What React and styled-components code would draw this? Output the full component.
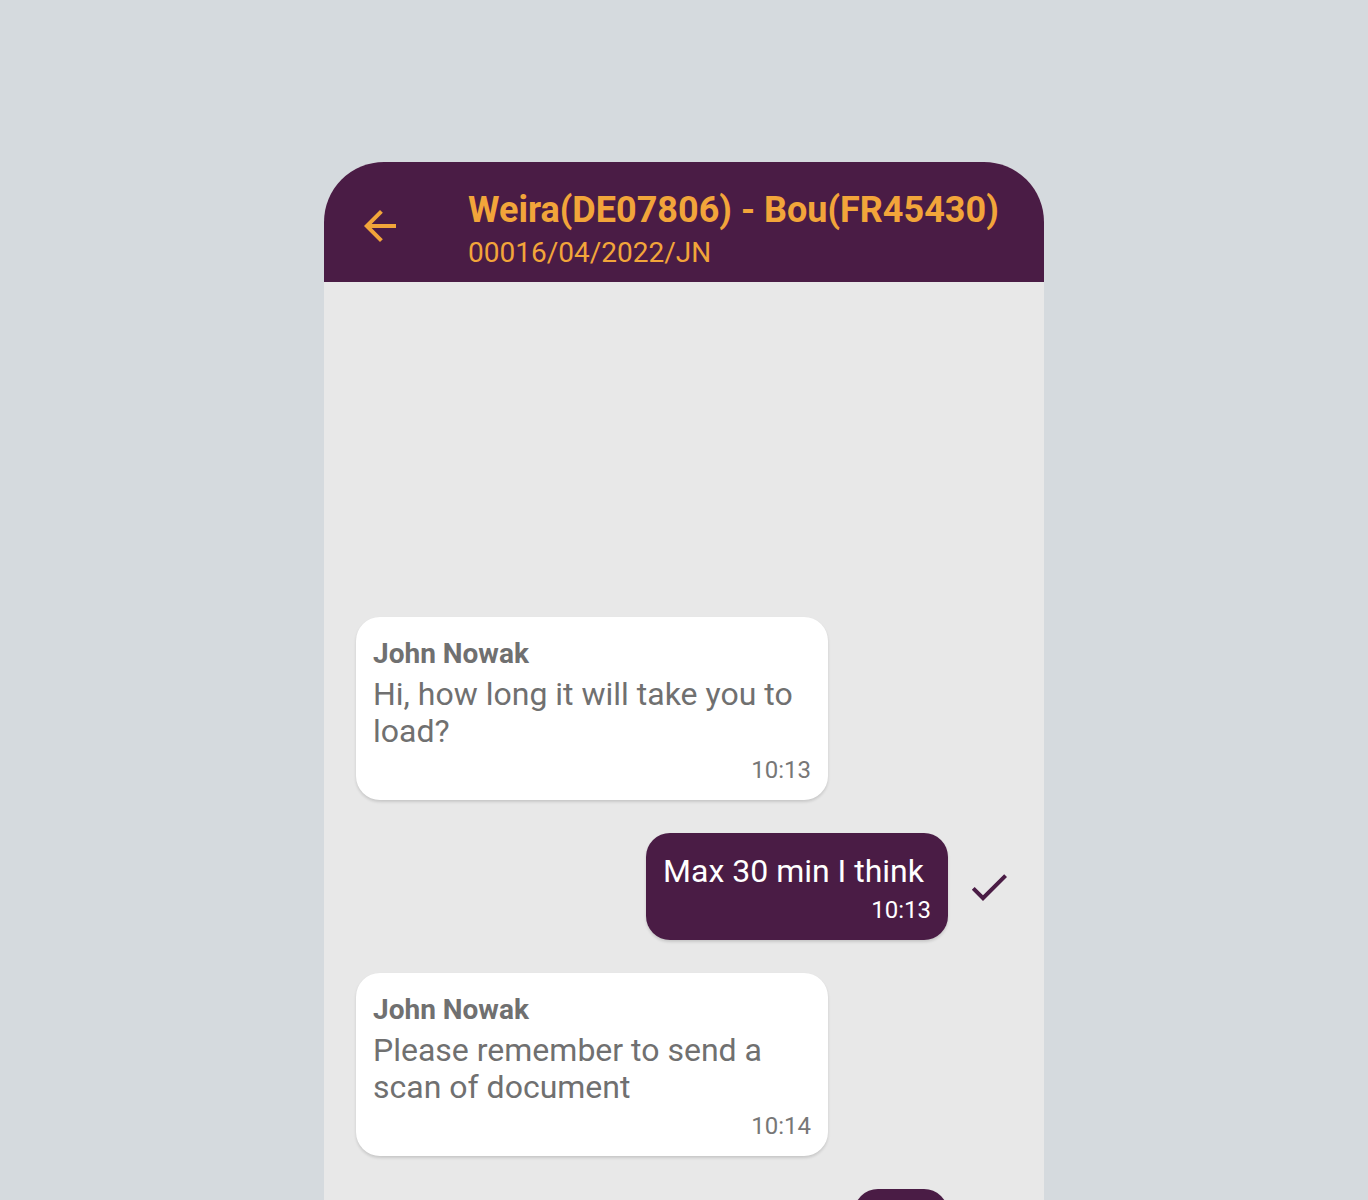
import React from 'react';
import styled, { createGlobalStyle } from 'styled-components';

const GlobalStyle = createGlobalStyle`
    html, body {
        margin: 0;
        padding: 0;
        background: #d5dade;
        overflow: hidden;
    }
    body {
        font-family: Roboto, "Noto Sans", Arial, sans-serif;
    }
`;

const Page = styled.div`
    display: flex;
    justify-content: center;
    padding-top: 162px;
    min-height: 1200px;
    box-sizing: border-box;
`;

const Phone = styled.div`
    width: 720px;
    min-height: 1100px;
    background: #e8e8e8;
    border-radius: 60px 60px 0 0;
    overflow: hidden;
    display: flex;
    flex-direction: column;
`;

const Header = styled.header`
    height: 120px;
    box-sizing: border-box;
    background: #4a1c45;
    display: flex;
    align-items: flex-start;
    padding: 27px 32px 0;
    gap: 64px;
`;

const BackButton = styled.div`
    width: 48px;
    height: 48px;
    margin-top: 13px;
    flex-shrink: 0;
    svg {
        display: block;
        fill: #f2a53a;
    }
`;

const Titles = styled.div`
    display: flex;
    flex-direction: column;
    gap: 5px;
    color: #f2a53a;
`;

const Title = styled.h1`
    margin: 0;
    font-size: 36px;
    line-height: 42px;
    font-weight: 700;
`;

const Subtitle = styled.div`
    font-size: 28px;
    line-height: 33px;
`;

const Messages = styled.div`
    display: flex;
    flex-direction: column;
    gap: 33px;
    padding: 335px 0 40px;
`;

const Row = styled.div`
    display: flex;
    align-items: center;
    justify-content: ${(p) => (p.$mine ? 'flex-end' : 'flex-start')};
    padding: ${(p) => (p.$mine ? '0 31px 0 0' : '0 0 0 32px')};
    gap: 17px;
`;

const Bubble = styled.div`
    box-sizing: border-box;
    width: ${(p) => (p.$mine ? 'auto' : '472px')};
    border-radius: 24px;
    padding: 20px 17px 16px;
    background: ${(p) => (p.$mine ? '#4a1c45' : '#ffffff')};
    color: ${(p) => (p.$mine ? '#ffffff' : '#707070')};
    box-shadow: 0 2px 3px rgba(0, 0, 0, 0.14);
    display: flex;
    flex-direction: column;
`;

const Author = styled.div`
    font-size: 28px;
    line-height: 33px;
    font-weight: 700;
    margin-bottom: 6px;
`;

const Text = styled.div`
    font-size: 32px;
    line-height: 37px;
    margin-right: ${(p) => (p.$mine ? '7px' : '0')};
`;

const Time = styled.div`
    align-self: flex-end;
    font-size: 24px;
    line-height: 28px;
    margin-top: 6px;
    color: ${(p) => (p.$mine ? '#ffffff' : '#777777')};
`;

const Tick = styled.div`
    width: 48px;
    height: 48px;
    flex-shrink: 0;
    svg {
        display: block;
        fill: #4a1c45;
    }
`;

const messages = [
    { id: 1, author: 'John Nowak', text: 'Hi, how long it will take you to load?', time: '10:13' },
    { id: 2, mine: true, text: 'Max 30 min I think', time: '10:13' },
    { id: 3, author: 'John Nowak', text: 'Please remember to send a scan of document', time: '10:14' },
    { id: 4, mine: true, text: 'Ok', time: '10:15' },
];

const ArrowBack = () => (
    <svg width="48" height="48" viewBox="0 0 24 24">
        <path d="M20 11H7.83l5.59-5.59L12 4l-8 8 8 8 1.41-1.41L7.83 13H20v-2z" />
    </svg>
);

const Check = () => (
    <svg width="48" height="48" viewBox="0 0 24 24">
        <path d="M9 16.17L4.83 12l-1.42 1.41L9 19 21 7l-1.41-1.41z" />
    </svg>
);

const App = () => (
    <>
        <GlobalStyle />
        <Page>
            <Phone>
                <Header>
                    <BackButton>
                        <ArrowBack />
                    </BackButton>
                    <Titles>
                        <Title>Weira(DE07806) - Bou(FR45430)</Title>
                        <Subtitle>00016/04/2022/JN</Subtitle>
                    </Titles>
                </Header>
                <Messages>
                    {messages.map((m) => (
                        <Row key={m.id} $mine={m.mine}>
                            <Bubble $mine={m.mine}>
                                {m.author && <Author>{m.author}</Author>}
                                <Text $mine={m.mine}>{m.text}</Text>
                                <Time $mine={m.mine}>{m.time}</Time>
                            </Bubble>
                            {m.mine && (
                                <Tick>
                                    <Check />
                                </Tick>
                            )}
                        </Row>
                    ))}
                </Messages>
            </Phone>
        </Page>
    </>
);

export default App;
